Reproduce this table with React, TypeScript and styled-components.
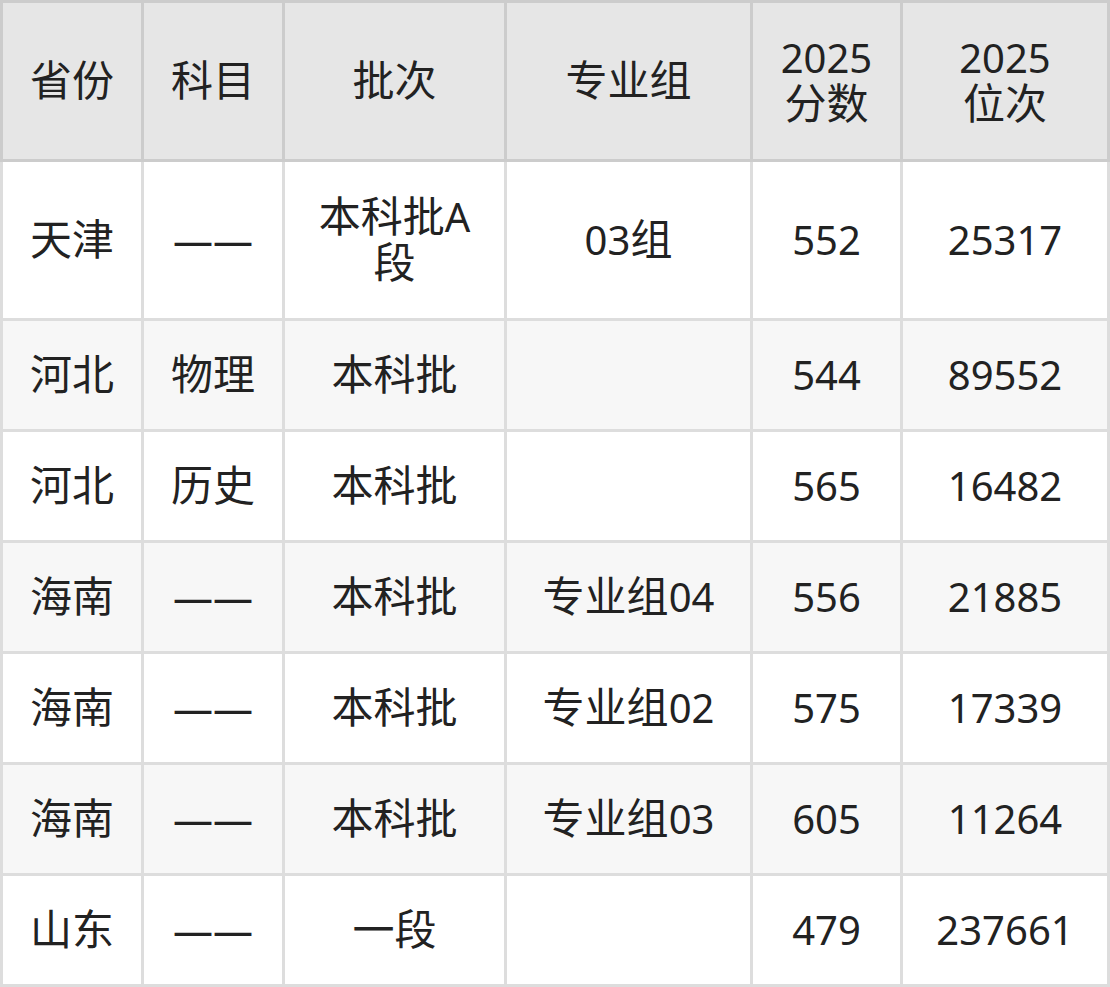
import React from "react";
import styled, { createGlobalStyle } from "styled-components";

const Global = createGlobalStyle`
  html, body { margin: 0; padding: 0; background: #fff; }
  body { font-family: "Noto Sans", "Noto Sans CJK SC", sans-serif; }
`;

const Table = styled.table`
  width: 1110px;
  border-collapse: collapse;
  table-layout: fixed;
  color: #222;
  font-size: 40px;
  line-height: 46px;
`;

const HeadCell = styled.th`
  background: #e6e6e6;
  border: 3px solid #cccccc;
  font-weight: 400;
  text-align: center;
  vertical-align: middle;
  padding: 0 20px;
`;

const HeadRow = styled.tr`
  height: 159px;
`;

const BodyRow = styled.tr<{ $striped: boolean; $tall?: boolean }>`
  height: ${(p) => (p.$tall ? "159px" : "111px")};
  background: ${(p) => (p.$striped ? "#f7f7f7" : "#ffffff")};
`;

const Cell = styled.td`
  border: 3px solid #dddddd;
  text-align: center;
  vertical-align: middle;
  padding: 0 20px;
`;

const Han = styled.span`
  font-family: "Noto Sans CJK SC", sans-serif;
  font-size: 42px;
  line-height: 40px;
`;

const hanRe = /([\u3000-\u9fff]+)/;

function Txt({ text }: { text: string }) {
  const parts = text.split(hanRe).filter((p) => p !== "");
  return (
    <>
      {parts.map((p, i) =>
        hanRe.test(p) ? <Han key={i}>{p}</Han> : <React.Fragment key={i}>{p}</React.Fragment>
      )}
    </>
  );
}

const widths = [141, 141, 222, 246, 150, 207];

const rows: string[][] = [
  ["天津", "——", "本科批A段", "03组", "552", "25317"],
  ["河北", "物理", "本科批", "", "544", "89552"],
  ["河北", "历史", "本科批", "", "565", "16482"],
  ["海南", "——", "本科批", "专业组04", "556", "21885"],
  ["海南", "——", "本科批", "专业组02", "575", "17339"],
  ["海南", "——", "本科批", "专业组03", "605", "11264"],
  ["山东", "——", "一段", "", "479", "237661"],
];

export default function App() {
  return (
    <>
      <Global />
      <Table>
        <colgroup>
          {widths.map((w, i) => (
            <col key={i} style={{ width: w }} />
          ))}
        </colgroup>
        <thead>
          <HeadRow>
            <HeadCell><Txt text="省份" /></HeadCell>
            <HeadCell><Txt text="科目" /></HeadCell>
            <HeadCell><Txt text="批次" /></HeadCell>
            <HeadCell><Txt text="专业组" /></HeadCell>
            <HeadCell>
              2025
              <br />
              <Txt text="分数" />
            </HeadCell>
            <HeadCell>
              2025
              <br />
              <Txt text="位次" />
            </HeadCell>
          </HeadRow>
        </thead>
        <tbody>
          {rows.map((r, i) => (
            <BodyRow key={i} $striped={i % 2 === 1} $tall={i === 0}>
              {r.map((c, j) => (
                <Cell key={j}>
                  <Txt text={c} />
                </Cell>
              ))}
            </BodyRow>
          ))}
        </tbody>
      </Table>
    </>
  );
}
